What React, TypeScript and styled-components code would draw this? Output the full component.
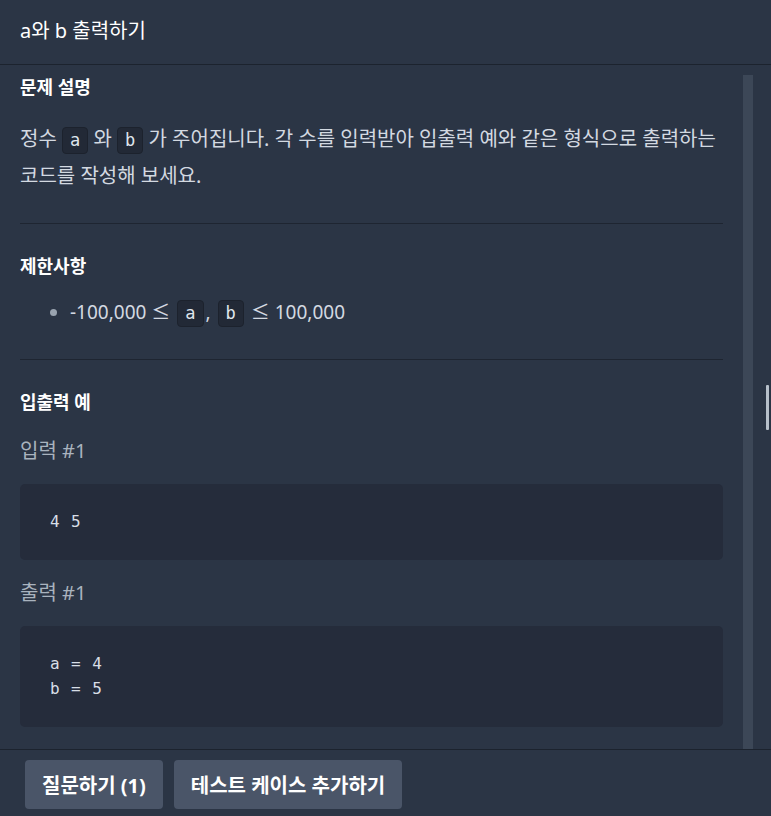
import React from "react";
import styled, { createGlobalStyle } from "styled-components";

const GlobalStyle = createGlobalStyle`
  html, body { margin: 0; padding: 0; background: #2b3545; }
  * { box-sizing: border-box; }
  body { font-family: "Noto Sans", "Noto Sans CJK KR", sans-serif; }
`;

const SANS = `"Noto Sans", "Noto Sans CJK KR", sans-serif`;
const MONO = `"DejaVu Sans Mono", "Liberation Mono", monospace`;

const Shell = styled.div`
  height: 816px;
  display: flex;
  flex-direction: column;
  background: #2b3545;
  color: #d3d9e1;
  font-family: ${SANS};
  overflow: hidden;
`;

const Header = styled.header`
  height: 65px;
  flex-shrink: 0;
  display: flex;
  align-items: center;
  padding: 0 20px 5px;
  border-bottom: 1px solid #1c232e;
  font-size: 20px;
  color: #ffffff;
`;

const Body = styled.div`
  flex: 1;
  display: flex;
  min-height: 0;
  overflow: hidden;
`;

const Content = styled.main`
  flex: 1;
  padding: 10px 20px 0 20px;
  overflow: hidden;
`;

const Track = styled.div`
  width: 10px;
  margin-top: 10px;
  background: #3c4757;
  flex-shrink: 0;
`;

const Gutter = styled.div`
  width: 18px;
  flex-shrink: 0;
  display: flex;
  align-items: center;
  justify-content: flex-end;
  padding-right: 2px;
`;

const Handle = styled.div`
  width: 3px;
  height: 45px;
  background: #b7c0ca;
  border-radius: 1px;
`;

const Heading = styled.h3<{ $gap?: number }>`
  margin: ${(p) => p.$gap ?? 0}px 0 0;
  font-size: 18px;
  font-weight: 700;
  line-height: 24px;
  color: #ffffff;
`;

const Paragraph = styled.p`
  margin: 21px 0 0;
  font-size: 20px;
  line-height: 37px;
  color: #d3d9e1;
`;

const Divider = styled.hr<{ $top: number }>`
  margin: ${(p) => p.$top}px 0 0;
  border: 0;
  height: 1px;
  background: #1e2531;
`;

const Chip = styled.code<{ $gapX?: number }>`
  display: inline-block;
  font-family: ${MONO};
  font-size: 17px;
  line-height: 25px;
  padding: 0 7px;
  margin: 0 ${(p) => p.$gapX ?? 0}px;
  background: #222936;
  border: 1px solid #1c222d;
  border-radius: 4px;
  color: #dfe5ec;
  vertical-align: middle;
`;

const List = styled.ul`
  margin: 16px 0 0;
  padding: 0 0 0 50px;
  font-size: 19px;
  line-height: 37px;
  color: #d3d9e1;
  li::marker { color: #9aa4b0; }
`;

const SubLabel = styled.div<{ $gap: number }>`
  margin-top: ${(p) => p.$gap}px;
  font-size: 20px;
  line-height: 24px;
  color: #a9b3be;
`;

const CodeBlock = styled.pre`
  margin: 21px 0 0;
  padding: 25px 30px 26px;
  background: #252c3b;
  border-radius: 5px;
  font-family: ${MONO};
  font-size: 16px;
  letter-spacing: 0.9px;
  line-height: 25px;
  color: #d8dee6;
`;

const Footer = styled.footer`
  height: 67px;
  flex-shrink: 0;
  border-top: 1px solid #1c232e;
  display: flex;
  align-items: flex-start;
  gap: 11px;
  padding: 10px 25px 0;
`;

const Button = styled.button`
  height: 49px;
  padding: 0 17px;
  border: 0;
  border-radius: 4px;
  background: #4a5568;
  color: #ffffff;
  font-family: ${SANS};
  font-size: 20px;
  font-weight: 700;
  cursor: pointer;
`;

export default function App() {
  return (
    <>
      <GlobalStyle />
      <Shell>
        <Header>a와 b 출력하기</Header>
        <Body>
          <Content>
            <Heading>문제 설명</Heading>
            <Paragraph>
              정수 <Chip>a</Chip> 와 <Chip>b</Chip> 가 주어집니다. 각 수를 입력받아 입출력 예와 같은 형식으로 출력하는
              코드를 작성해 보세요.
            </Paragraph>
            <Divider $top={29} />
            <Heading $gap={30}>제한사항</Heading>
            <List>
              <li>
                -100,000 ≤ <Chip $gapX={2}>a</Chip>, <Chip $gapX={2}>b</Chip> ≤ 100,000
              </li>
            </List>
            <Divider $top={28} />
            <Heading $gap={30}>입출력 예</Heading>
            <SubLabel $gap={25}>입력 #1</SubLabel>
            <CodeBlock>4 5</CodeBlock>
            <SubLabel $gap={21}>출력 #1</SubLabel>
            <CodeBlock>{"a = 4\nb = 5"}</CodeBlock>
          </Content>
          <Track />
          <Gutter>
            <Handle />
          </Gutter>
        </Body>
        <Footer>
          <Button>질문하기 (1)</Button>
          <Button>테스트 케이스 추가하기</Button>
        </Footer>
      </Shell>
    </>
  );
}
